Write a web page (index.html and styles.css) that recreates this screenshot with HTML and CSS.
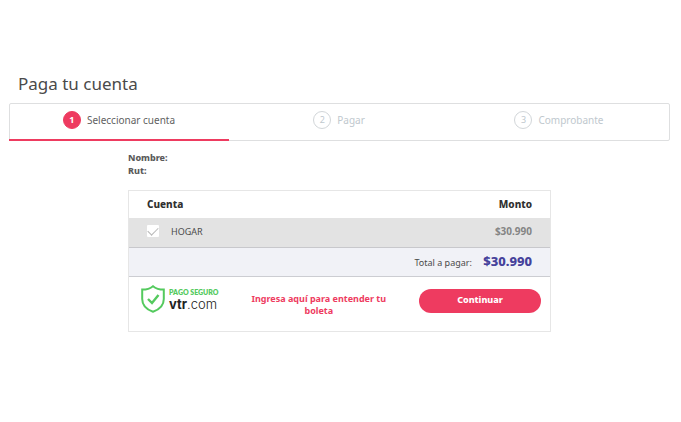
FILE: index.html
```html
<!DOCTYPE html>
<html lang="es">
<head>
  <meta charset="UTF-8">
  <meta name="viewport" content="width=device-width, initial-scale=1">
  <title>Paga tu cuenta</title>
  <link rel="stylesheet" href="styles.css">
</head>
<body>
  <main class="page">
    <h1>Paga tu cuenta</h1>

    <ol class="steps">
      <li class="step active"><span class="number">1</span>Seleccionar cuenta</li>
      <li class="step"><span class="number">2</span>Pagar</li>
      <li class="step"><span class="number">3</span>Comprobante</li>
    </ol>

    <div class="content">
      <div class="client">
        <div>Nombre:</div>
        <div>Rut:</div>
      </div>

      <form class="card">
        <table class="accounts">
          <thead>
            <tr><th>Cuenta</th><th class="amount">Monto</th></tr>
          </thead>
          <tbody>
            <tr>
              <td><label class="account"><input type="checkbox" checked>HOGAR</label></td>
              <td class="amount">$30.990</td>
            </tr>
          </tbody>
          <tfoot>
            <tr><td colspan="2" class="amount">Total a pagar: <strong>$30.990</strong></td></tr>
          </tfoot>
        </table>

        <div class="actions">
          <div class="secure">
            <svg class="shield" viewBox="0 0 24 28" fill="none" stroke="#54ca5e" stroke-width="2" aria-hidden="true">
              <path d="M12 1.2C9 3.7 5.500 4.600 1.200 4.600V14c0 6.500 4.300 10.500 10.800 12.800C18.500 24.500 22.800 20.500 22.800 14V4.600C18.500 4.600 15 3.700 12 1.200z"/>
              <path d="M7 14l4 4 6.500-8" stroke-width="2.400"/>
            </svg>
            <div>
              <div class="secure-title">PAGO SEGURO</div>
              <div class="brand"><b>vtr</b>.com</div>
            </div>
          </div>
          <a class="help" href="#">Ingresa aquí para entender tu boleta</a>
          <button class="continue" type="submit">Continuar</button>
        </div>
      </form>
    </div>
  </main>
</body>
</html>
```

FILE: styles.css
```css
* { box-sizing: border-box; }
body { margin: 0; background: #fff; color: #4a4a4a; font-family: "Noto Sans", "Open Sans", sans-serif; font-size: 9px; }
.page { padding: 72px 11px 0 9px; }
h1 { margin: 0 0 7px 9px; font-size: 17px; line-height: 24px; font-weight: 400; }

.steps { display: flex; height: 38px; margin: 0; padding: 0; list-style: none; border: 1px solid #dedfe0; border-radius: 2px; }
.step { flex: 1; display: flex; align-items: center; justify-content: center; gap: 6px; margin: -1px 0; padding-bottom: 4px; font-size: 10px; color: #c0c8ce; }
.step.active { color: #5f5f5f; margin-left: -1px; border-bottom: 2px solid #ee3b60; padding-bottom: 2px; }
.number { width: 18px; height: 18px; border: 1px solid #d2d6d9; border-radius: 50%; font-size: 9px; line-height: 16px; text-align: center; }
.active .number { background: #ee3b60; border-color: #ee3b60; color: #fff; font-weight: 700; }

.content { width: 64%; margin: 10px auto 0; }
.client { font-size: 9px; line-height: 13px; font-weight: 800; color: #5a5a5a; }

.card { margin-top: 13px; border: 1px solid #e6e6e6; }
.accounts { width: 100%; border-collapse: collapse; }
.accounts th, .accounts td { height: 29px; padding: 0 18px 2px; text-align: left; }
.accounts th { height: 27px; padding-bottom: 1px; font-size: 10px; font-weight: 800; color: #303030; }
.accounts .amount { text-align: right; }
.accounts tbody { background: #e3e3e3; }
.accounts tbody .amount { font-size: 10px; color: #858585; font-weight: 700; }
.accounts tfoot { background: #f1f2f7; }
.accounts tfoot td { border-top: 1px solid #c8c8cc; border-bottom: 1px solid #cccdd2; }
.accounts strong { margin-left: 9px; font-size: 13px; font-weight: 800; color: #45419b; }
.account { display: flex; align-items: center; gap: 12px; }
.account input { appearance: none; width: 12px; height: 12px; margin: 0; display: grid; place-items: center; background: #fff; border-radius: 1px; }
.account input:checked::before { content: ""; width: 9px; height: 5px; margin-bottom: 3px; border: solid #b8b8b8; border-width: 0 0 1px 1px; transform: rotate(-45deg); }

.actions { display: flex; align-items: flex-start; justify-content: space-between; height: 54px; padding: 8px 9px 0 12px; }
.secure { display: flex; align-items: center; gap: 4px; }
.shield { width: 24px; height: 28px; }
.secure-title { padding-top: 2px; font-family: Lato, sans-serif; font-size: 7px; line-height: 9px; font-weight: 800; color: #54ca5e; }
.brand { font-family: Inter, sans-serif; font-size: 13px; line-height: 15px; font-weight: 300; color: #222; }
.brand b { font-weight: 700; }
.help { width: 144px; margin-top: 8px; font-size: 9px; line-height: 12px; font-weight: 700; color: #ee3b60; text-align: center; text-decoration: none; }
.continue { width: 122px; height: 24px; margin-top: 4px; padding: 0 0 2px; border: 0; border-radius: 12px; background: #ee3b60; color: #fff; font-family: inherit; font-size: 9px; font-weight: 800; }
```
